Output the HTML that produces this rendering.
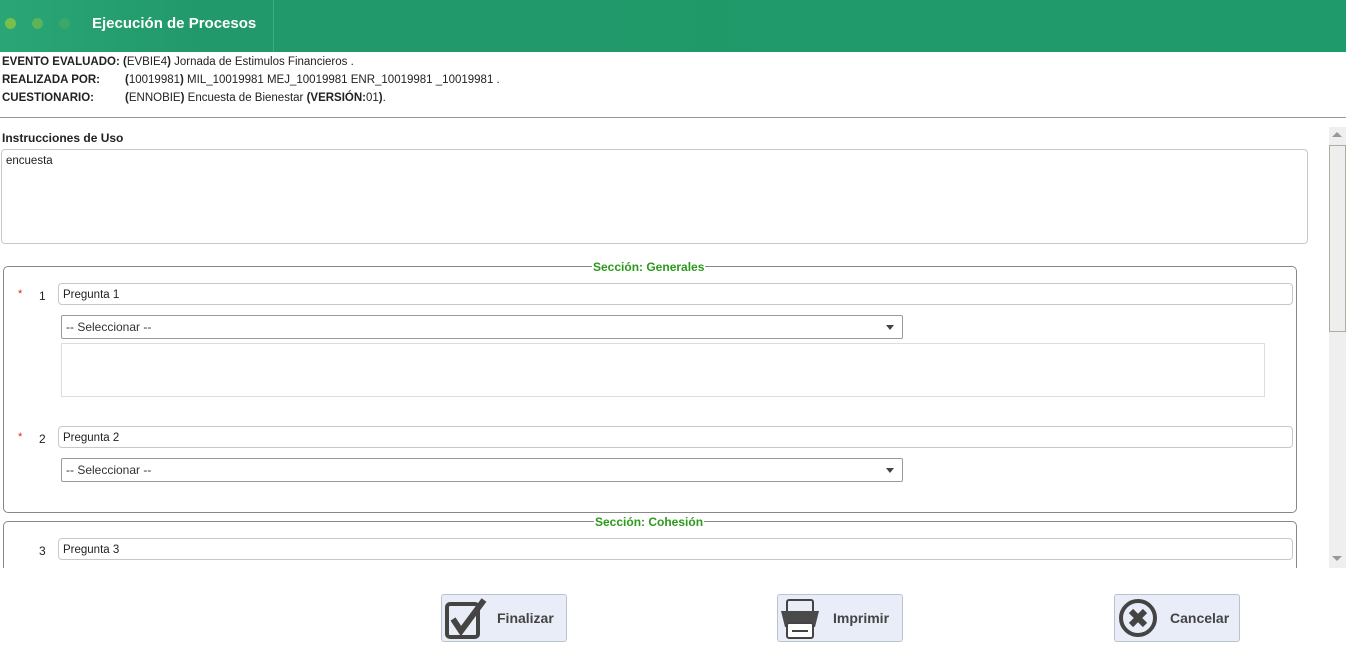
<!DOCTYPE html>
<html><head><meta charset="utf-8"><style>
*{box-sizing:border-box;margin:0;padding:0}
body{width:1346px;height:660px;overflow:hidden;background:#fff;font-family:"Liberation Sans",sans-serif;font-size:12px;color:#222;position:relative}
.a{position:absolute}
.hdr{left:0;top:0;width:1346px;height:52px;background:linear-gradient(90deg,#2aa676 0,#22996a 200px,#1f9a6a 100%)}
.dot{width:11px;height:11px;border-radius:50%;top:18px}
.title{left:92px;top:15px;color:#fff;font-weight:bold;font-size:15px}
.info{left:2px;font-size:11.5px;line-height:18px}
.inp{border:1px solid #c8c8c8;border-radius:4px;background:#fff;font-size:11.5px;padding:5px 4px 3px}
.sel{border:1px solid #9a9a9a;border-radius:2px;background:#fff;font-size:12px;padding:4px 4px 3px;color:#333}
.sel:after{content:"";position:absolute;right:8px;top:9px;border:4px solid transparent;border-top:5px solid #444}
.fs{border:1px solid #888;border-radius:5px}
.leg{background:#fff;color:#2a9a1a;font-weight:bold;font-size:12px;padding:0 1px}
.btn{width:126px;height:48px;border:1px solid #b7c2d2;border-radius:3px;background:#e8edf7;top:594px}
.btn span{position:absolute;left:55px;top:15px;font-size:14px;font-weight:bold;color:#444}
.n{font-size:12px}
.req{color:#d22;font-size:11px}
</style></head><body>
<div class="a hdr"></div>
<div class="a dot" style="left:5px;background:#79c04a"></div>
<div class="a dot" style="left:32px;background:#5db25a"></div>
<div class="a dot" style="left:59px;background:#3aa866"></div>
<div class="a" style="left:273px;top:0;width:1px;height:52px;background:#3bb07e"></div>
<div class="a title">Ejecución de Procesos</div>
<div class="a info" style="top:53px"><b>EVENTO EVALUADO:</b> <b>(</b>EVBIE4<b>)</b> Jornada de Estimulos Financieros .</div>
<div class="a info" style="top:71px"><b>REALIZADA POR:</b></div>
<div class="a info" style="top:71px;left:125px"><b>(</b>10019981<b>)</b> MIL_10019981 MEJ_10019981 ENR_10019981 _10019981 .</div>
<div class="a info" style="top:89px"><b>CUESTIONARIO:</b></div>
<div class="a info" style="top:89px;left:125px"><b>(</b>ENNOBIE<b>)</b> Encuesta de Bienestar <b>(VERSIÓN:</b>01<b>)</b>.</div>
<div class="a" style="left:0;top:117px;width:1346px;height:1px;background:#999"></div>
<div class="a" style="left:2px;top:131px;font-weight:bold;font-size:12px">Instrucciones de Uso</div>
<div class="a inp" style="left:1px;top:149px;width:1307px;height:95px">encuesta</div>

<div class="a fs" style="left:3px;top:266px;width:1294px;height:247px"></div>
<div class="a leg" style="left:592px;top:260px">Sección: Generales</div>
<div class="a req" style="left:18px;top:288px">*</div><div class="a n" style="left:39px;top:289px">1</div>
<div class="a inp" style="left:58px;top:283px;width:1235px;height:22px">Pregunta 1</div>
<div class="a sel" style="left:61px;top:315px;width:842px;height:24px">-- Seleccionar --</div>
<div class="a inp" style="left:61px;top:343px;width:1204px;height:54px;border-radius:0;border-color:#ddd"></div>
<div class="a req" style="left:18px;top:431px">*</div><div class="a n" style="left:39px;top:432px">2</div>
<div class="a inp" style="left:58px;top:426px;width:1235px;height:22px">Pregunta 2</div>
<div class="a sel" style="left:61px;top:458px;width:842px;height:24px">-- Seleccionar --</div>

<div class="a fs" style="left:3px;top:521px;width:1294px;height:60px"></div>
<div class="a leg" style="left:594px;top:515px">Sección: Cohesión</div>
<div class="a n" style="left:39px;top:544px">3</div>
<div class="a inp" style="left:58px;top:538px;width:1235px;height:22px">Pregunta 3</div>
<div class="a" style="left:0;top:568px;width:1346px;height:92px;background:#fff"></div>

<div class="a" style="left:1329px;top:127px;width:17px;height:441px;background:#efefef"></div>
<div class="a" style="left:1329px;top:145px;width:17px;height:187px;background:#eee;border:1px solid #aab0a0"></div>
<div class="a" style="left:1332px;top:132px;border:5px solid transparent;border-bottom:5px solid #999;border-top:0"></div>
<div class="a" style="left:1332px;top:556px;border:5px solid transparent;border-top:5px solid #999;border-bottom:0"></div>

<div class="a btn" style="left:441px"><svg class="a" style="left:2px;top:2px" width="44" height="44" viewBox="0 0 44 44"><rect x="3" y="7" width="31" height="33" rx="3" fill="none" stroke="#444" stroke-width="4"/><path d="M9 22 L17 34 L40 3" fill="none" stroke="#444" stroke-width="6"/></svg><span>Finalizar</span></div>
<div class="a btn" style="left:777px"><svg class="a" style="left:2px;top:2px" width="44" height="44" viewBox="0 0 44 44"><rect x="7" y="3" width="26" height="14" rx="2" fill="none" stroke="#444" stroke-width="2"/><path d="M1 14 H39 L35 30 H5 Z" fill="#4a4a4a"/><rect x="7" y="26" width="26" height="15" rx="2" fill="#fff" stroke="#444" stroke-width="2"/><line x1="12" y1="34" x2="28" y2="34" stroke="#444" stroke-width="2"/></svg><span>Imprimir</span></div>
<div class="a btn" style="left:1114px"><svg class="a" style="left:2px;top:3px" width="44" height="44" viewBox="0 0 44 44"><circle cx="21" cy="20" r="17" fill="none" stroke="#444" stroke-width="4"/><path d="M14 13 L28 27 M28 13 L14 27" stroke="#444" stroke-width="6"/></svg><span>Cancelar</span></div>
</body></html>
